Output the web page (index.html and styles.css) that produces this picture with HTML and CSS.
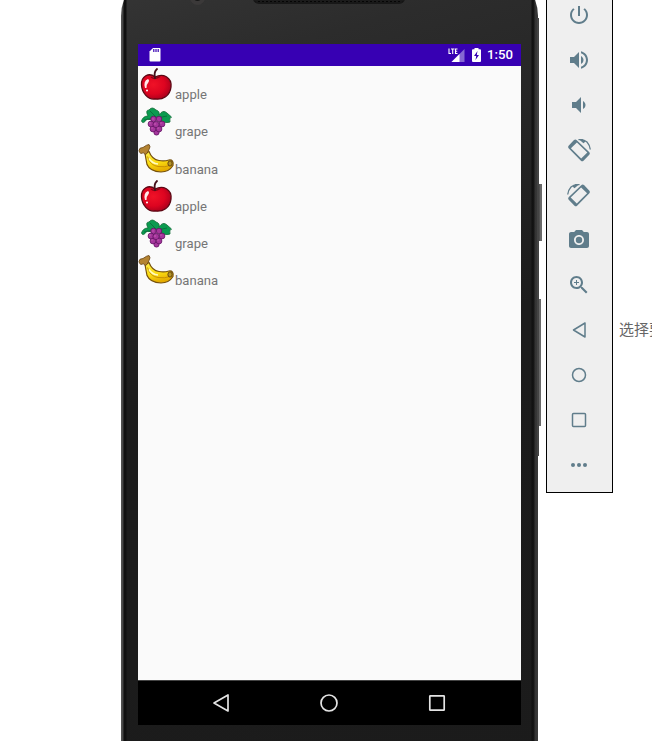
FILE: index.html
```html
<!DOCTYPE html>
<html lang="en">
<head>
<meta charset="utf-8">
<title>Emulator</title>
<link rel="stylesheet" href="styles.css">
</head>
<body>
<svg width="0" height="0" class="defs">
  <defs>
    <radialGradient id="red" cx=".4" cy=".4" r=".65"><stop offset="0" stop-color="#f01227"/><stop offset=".6" stop-color="#dd0420"/><stop offset="1" stop-color="#a8001c"/></radialGradient>
    <linearGradient id="yellow" x1="0" y1="0" x2=".3" y2="1"><stop offset="0" stop-color="#fff04a"/><stop offset=".6" stop-color="#fbdc10"/><stop offset="1" stop-color="#e5ac00"/></linearGradient>
    <symbol id="apple" viewBox="0 0 37 37">
      <path d="M17 10C11 5 3 9 3.500 18C4 26 10 33 17 32C25 33 32 29 33 20C34 10 25 6 17 10Z" fill="url(#red)" stroke="#5c0713" stroke-width="1.300"/>
      <path d="M13 10Q17 13 22 9.500" fill="none" stroke="#870316" stroke-width="1.500"/>
      <path d="M17 11Q15.500 5 19 2" fill="none" stroke="#46101a" stroke-width="1.900" stroke-linecap="round"/>
      <path d="M7 21Q5 14 10 12Q12 13 10 16Q8 18 8.500 21Z" fill="#ffe9eb"/>
      <circle cx="9" cy="23.500" r="1" fill="#fff"/>
    </symbol>
    <symbol id="grape" viewBox="0 0 37 37">
      <g transform="translate(0 2)">
        <path d="M17 11Q12 15 9 13Q5 19 3.500 15Q5 10 10 10Q7 4 11 4Q14 0 18 4Q22 5 21 9Q25 3 29 7L33.500 11Q31 12 32 16Q26 18 20 13Z" fill="#0b9b50" stroke="#126b36" stroke-width=".8"/>
        <path d="M6 14Q14 13 18 11L12 5M19 12L29 10" fill="none" stroke="#0a6838" stroke-width=".8"/>
        <g fill="#a5369c" stroke="#611262" stroke-width=".8"><circle cx="18.500" cy="26.500" r="2.600"/><circle cx="15" cy="23" r="2.900"/><circle cx="21" cy="23" r="2.900"/><circle cx="13" cy="18" r="2.900"/><circle cx="24" cy="18" r="2.900"/><circle cx="18" cy="18.500" r="3.100"/><circle cx="15.500" cy="13" r="2.800"/><circle cx="21" cy="13" r="2.800"/></g>
        <g fill="#d163b9"><circle cx="15" cy="13" r=".7"/><circle cx="12" cy="17" r=".7"/><circle cx="17" cy="18" r=".8"/><circle cx="23" cy="17" r=".7"/><circle cx="14" cy="22" r=".7"/><circle cx="20" cy="22" r=".7"/></g>
      </g>
    </symbol>
    <symbol id="banana" viewBox="0 0 37 37">
      <g transform="translate(0 1.500)">
        <path d="M11 8Q14 16 21 17Q26 18 31 16.500Q36 16 35 22Q31 28.500 23 28.500Q12 28 9 21Q8 16 7 10Z" fill="url(#yellow)" stroke="#76510c" stroke-width="1.200"/>
        <path d="M9.500 13Q12 22 20 23Q27 24 32 22" fill="none" stroke="#c38a05" stroke-width=".9"/>
        <path d="M11 15Q14 20 20 20.500" fill="none" stroke="#fffac0" stroke-width="1.500"/>
        <path d="M1 7Q1 4 5 4Q9 1 11 1Q13 3 11 6L9 10L7 11Q6 8 3 10Q1 9 1 7Z" fill="#b48432" stroke="#684414" stroke-width=".8"/>
        <ellipse cx="32" cy="20" rx="2.100" ry="2.600" fill="#b5972a" stroke="#624211"/>
      </g>
    </symbol>
    <symbol id="rotate" viewBox="0 0 24 24">
      <path fill-rule="evenodd" d="M7 2Q8.400 .9 9.800 2.200L22.400 14.300Q23.400 15.600 22.300 16.800L16.500 22.700Q15.200 23.800 13.900 22.700L1.600 10.300Q.5 9 1.600 7.700ZM9.900 4.500L3.900 10.300L14.200 20.500L20.300 14.600Z"/>
      <path class="arc" d="M11.500 1.700Q21.500 .5 23.300 11.500"/>
      <path d="M11.500 1L15.500 1L18.500 3.500L16.500 5.200Z"/>
    </symbol>
  </defs>
</svg>
<main class="desktop">
  <section class="phone">
    <div class="forehead"><i class="sensor"></i><i class="grille"></i></div>
    <div class="screen">
      <header class="status">
        <svg class="sd" width="12" height="14" viewBox="0 0 12 14"><path d="M4 0H10.500Q11.500 0 11.500 1V12.500Q11.500 13.500 10.500 13.500H1.500Q.5 13.500 .5 12.500V3.500Z" fill="#fff"/><path d="M4.800 1v3M7 1v3M9.200 1v3" stroke="#3700b3" stroke-width="1.200"/></svg>
        <svg class="signal" width="18" height="15" viewBox="0 0 18 15"><path d="M16.500 1V14H3.500Z" fill="#8668d2"/><path d="M11.500 6V14H3.500Z" fill="#fff"/><path d="M1 .5V5.500H3M3 1H6.500M4.700 1V6M9.500 1H7.500V5.500H9.500M7.500 3.200H9.200" fill="none" stroke="#fff" stroke-width="1.100"/></svg>
        <svg class="battery" width="9" height="14" viewBox="0 0 9 14"><path d="M2.500 0H6.500V1.300H8Q9 1.300 9 2.300V13Q9 14 8 14H1Q0 14 0 13V2.300Q0 1.300 1 1.300H2.500Z" fill="#fff"/><path d="M5.500 3L2 8H4.200L3.500 12L7 7H4.800Z" fill="#3700b3"/></svg>
        <span class="clock">1:50</span>
      </header>
      <ul class="list">
        <li><svg><use href="#apple"/></svg><span>apple</span></li>
        <li><svg><use href="#grape"/></svg><span>grape</span></li>
        <li><svg><use href="#banana"/></svg><span>banana</span></li>
        <li><svg><use href="#apple"/></svg><span>apple</span></li>
        <li><svg><use href="#grape"/></svg><span>grape</span></li>
        <li><svg><use href="#banana"/></svg><span>banana</span></li>
      </ul>
      <nav class="navbar">
        <svg viewBox="0 0 24 24"><path d="M19 4V20L5 12Z"/></svg>
        <svg viewBox="0 0 24 24"><circle cx="12" cy="12" r="8"/></svg>
        <svg viewBox="0 0 24 24"><rect x="4.800" y="4.800" width="14.400" height="14.400" rx=".5"/></svg>
      </nav>
    </div>
    <i class="key power"></i><i class="key volume"></i>
  </section>
  <aside class="tools">
    <svg viewBox="0 0 24 24"><path d="M13 3h-2v10h2V3zm4.830 2.170l-1.420 1.420C17.990 7.860 19 9.810 19 12c0 3.870-3.130 7-7 7s-7-3.130-7-7c0-2.190 1.010-4.140 2.580-5.420L6.170 5.170C4.230 6.820 3 9.260 3 12c0 4.970 4.030 9 9 9s9-4.030 9-9c0-2.740-1.230-5.180-3.170-6.830z"/></svg>
    <svg viewBox="0 0 24 24"><path d="M3 9v6h4l5 5V4L7 9H3zm13.500 3c0-1.770-1.020-3.290-2.500-4.030v8.050c1.480-.73 2.500-2.250 2.500-4.020zM14 3.230v2.060c2.890.86 5 3.540 5 6.710s-2.110 5.850-5 6.710v2.060c4.010-.91 7-4.490 7-8.770s-2.990-7.860-7-8.770z"/></svg>
    <svg viewBox="0 0 24 24"><path d="M18.500 12c0-1.770-1.020-3.290-2.500-4.030v8.050c1.480-.73 2.500-2.250 2.500-4.020zM5 9v6h4l5 5V4L9 9H5z"/></svg>
    <svg><use href="#rotate"/></svg>
    <svg class="mirrored"><use href="#rotate"/></svg>
    <svg viewBox="0 0 24 24"><path fill-rule="evenodd" d="M9 2L7.170 4H4c-1.100 0-2 .9-2 2v12c0 1.100.9 2 2 2h16c1.100 0 2-.9 2-2V6c0-1.100-.9-2-2-2h-3.170L15 2H9zm3 15c-2.760 0-5-2.240-5-5s2.240-5 5-5 5 2.240 5 5-2.240 5-5 5z"/><circle cx="12" cy="12" r="3.200"/></svg>
    <svg viewBox="0 0 24 24"><path d="M15.500 14h-.79l-.28-.27C15.410 12.590 16 11.110 16 9.500 16 5.910 13.090 3 9.500 3S3 5.910 3 9.500 5.910 16 9.500 16c1.610 0 3.090-.59 4.230-1.570l.27.28v.79l5 4.990L20.490 19l-4.990-5zm-6 0C7.010 14 5 11.990 5 9.500S7.010 5 9.500 5 14 7.010 14 9.500 11.990 14 9.500 14z"/><path d="M9 7h1v2h2v1h-2v2H9v-2H7V9h2Z"/></svg>
    <svg class="line" viewBox="0 0 24 24"><path d="M18 5V19L6.500 12Z"/></svg>
    <svg class="line" viewBox="0 0 24 24"><circle cx="12" cy="12" r="6.500"/></svg>
    <svg class="line" viewBox="0 0 24 24"><rect x="5.500" y="5.500" width="13" height="13" rx="1"/></svg>
    <svg viewBox="0 0 24 24"><circle cx="6" cy="12" r="2"/><circle cx="12" cy="12" r="2"/><circle cx="18" cy="12" r="2"/></svg>
  </aside>
  <p class="hint">选择要</p>
</main>
</body>
</html>
```

FILE: styles.css
```css
* { box-sizing: border-box; }
body { margin: 0; background: #fff; overflow: hidden; }
.defs { position: absolute; }
.desktop { display: flex; align-items: flex-start; width: 652px; height: 741px; overflow: hidden; padding-left: 121px; }
.phone {
  position: relative; flex: none; width: 417px; height: 871px; margin-top: -30px; padding: 30px 17px 0;
  border-radius: 46px 46px 0 0;
  background: linear-gradient(90deg, #555 0, #444 2px, #101010 3px, #101010 5px, transparent 6px, transparent 410px, #101010 411px, #161616 413px, #333 414px, #3a3a3a 100%),
    linear-gradient(165deg, #363636 0, #2c2c2c 12%, #1c1c1c 45%, #1b1b1b 100%);
}
.forehead { position: relative; height: 44px; }
.sensor { position: absolute; left: 52px; top: -10px; width: 15px; height: 15px; border-radius: 50%; background: #171717; border: 4px solid #3b3939; }
.grille { position: absolute; left: 115px; top: -8px; width: 152px; height: 12px; border-radius: 6px; background: radial-gradient(circle, #050505 1px, #1b1b1b 1.500px) 0 0 / 4px 4px; border-bottom: 2px solid #181818; }
.screen { display: flex; flex-direction: column; width: 383px; height: 681px; background: #fafafa; }
.status { flex: none; display: flex; align-items: center; height: 22px; padding: 0 8px 0 10px; background: #3700b3; color: #fff; }
.signal { margin-left: auto; margin-right: 6px; }
.battery { margin-right: 7px; }
.sd, .signal { transform: translateX(1px); }
.battery { transform: translateX(1px); }
.clock { font: 500 13.200px/22px Roboto, sans-serif; width: 26px; white-space: nowrap; }
.list { flex: 1; margin: 0; padding: 1px 0 0; list-style: none; }
.list li { display: flex; height: 37.250px; }
.list svg { width: 37px; height: 37px; flex: none; }
.list span { font: 13.100px/16px Roboto, sans-serif; color: #757575; padding-top: 20px; }
.navbar { flex: none; display: flex; justify-content: center; gap: 84px; align-items: center; height: 45px; padding: 0 2px 1px 0; background: #000; border-top: 1px solid #444; }
.navbar svg { width: 24px; height: 24px; fill: none; stroke: #e4e4e4; stroke-width: 1.700; stroke-linejoin: round; }
.key { position: absolute; background: linear-gradient(90deg, #444, #777 70%, #555); }
.power { left: 418px; top: 214px; width: 3px; height: 57px; }
.volume { left: 417px; top: 329px; width: 3px; height: 127px; }
.phone::after { content: ""; position: absolute; left: 416px; top: 48px; width: 2px; height: 438px; background: #444; }
.tools { flex: none; display: flex; flex-direction: column; align-items: center; gap: 21px; width: 67px; height: 503px; margin: -10px 0 0 8px; padding: 12px 1px 0 0; border: 1px solid #000; background: #efefef; }
.tools svg { width: 24px; height: 24px; flex: none; fill: #607d8b; overflow: visible; }
.tools .mirrored { transform: scaleX(-1); }
.arc { fill: none; stroke: #607d8b; stroke-width: 1.300; }
.tools .line { fill: none; stroke: #607d8b; stroke-width: 1.500; stroke-linejoin: round; }
.hint { flex: none; margin: 318px 0 0 6px; font: 15px/22px "Noto Sans CJK SC", sans-serif; color: #666; white-space: nowrap; }
```
